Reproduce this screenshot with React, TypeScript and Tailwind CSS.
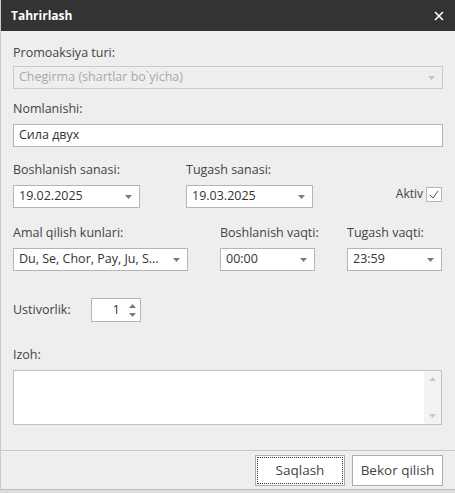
import React from "react";

const font = { fontFamily: '"Open Sans", "Noto Sans", sans-serif' };

const Arrow = ({ color = "#7a7a7a" }: { color?: string }) => (
  <svg width="7" height="4" viewBox="0 0 7 4" className="shrink-0">
    <path d="M0 0h7L3.5 4z" fill={color} />
  </svg>
);

const Label = ({ children }: { children: React.ReactNode }) => (
  <div className="text-[12.5px] leading-[16px] text-[#444] whitespace-nowrap">{children}</div>
);

const DropBox = ({ value, className = "" }: { value: string; className?: string }) => (
  <div className={`h-[23px] bg-white border border-[#b5b5b5] flex items-center justify-between pl-[5px] pr-[7px] ${className}`}>
    <span className="text-[12.5px] text-[#333] whitespace-nowrap">{value}</span>
    <Arrow />
  </div>
);

export default function App() {
  return (
    <div className="w-[455px] h-[493px] bg-[#dcdcdc] overflow-hidden" style={font}>
      <div className="h-[490px] bg-[#eeeeee] border-l border-[#c9c9c9] border-b border-b-[#bdbdbd] flex flex-col">
        <div className="h-[31px] bg-[#333333] flex items-center justify-between pl-[10px] pr-[11px] shrink-0">
          <span className="text-[12px] font-bold text-white">Tahrirlash</span>
          <svg width="10" height="10" viewBox="0 0 10 10">
            <path d="M1 1l8 8M9 1l-8 8" stroke="#fff" strokeWidth="1.6" />
          </svg>
        </div>

        <div className="px-[12px] flex-1 flex flex-col">
          <div className="mt-[14px]">
            <Label>Promoaksiya turi:</Label>
            <div className="mt-[5px] h-[23px] border border-[#c8c8c8] flex items-center justify-between pl-[5px] pr-[7px]">
              <span className="text-[12.5px] text-[#a9a9a9]">Chegirma (shartlar bo`yicha)</span>
              <Arrow color="#c4c4c4" />
            </div>
          </div>

          <div className="mt-[12px]">
            <Label>Nomlanishi:</Label>
            <div className="mt-[7px] h-[23px] bg-white border border-[#b5b5b5] flex items-center pl-[5px]">
              <span className="text-[12.5px] text-[#333]">Сила двух</span>
            </div>
          </div>

          <div className="mt-[15px] flex items-end">
            <div className="w-[127px]">
              <Label>Boshlanish sanasi:</Label>
              <DropBox value="19.02.2025" className="mt-[7px]" />
            </div>
            <div className="w-[127px] ml-[46px]">
              <Label>Tugash sanasi:</Label>
              <DropBox value="19.03.2025" className="mt-[7px]" />
            </div>
            <div className="ml-auto mr-[1px] mb-[5px] flex items-center gap-[3px]">
              <span className="text-[12px] text-[#444]">Aktiv</span>
              <div className="w-[16px] h-[15px] bg-white border border-[#b5b5b5] flex items-center justify-center">
                <svg width="10" height="9" viewBox="0 0 10 9">
                  <path d="M1 5l3 3 5-7" stroke="#555" strokeWidth="1" fill="none" />
                </svg>
              </div>
            </div>
          </div>

          <div className="mt-[17px] flex">
            <div className="w-[175px]">
              <Label>Amal qilish kunlari:</Label>
              <DropBox value="Du, Se, Chor, Pay, Ju, S..." className="mt-[7px]" />
            </div>
            <div className="w-[95px] ml-[32px]">
              <Label>Boshlanish vaqti:</Label>
              <DropBox value="00:00" className="mt-[7px]" />
            </div>
            <div className="w-[95px] ml-[32px]">
              <Label>Tugash vaqti:</Label>
              <DropBox value="23:59" className="mt-[7px]" />
            </div>
          </div>

          <div className="mt-[27px] flex items-center">
            <div className="w-[78px]">
              <Label>Ustivorlik:</Label>
            </div>
            <div className="w-[50px] h-[24px] bg-white border border-[#b5b5b5] flex items-center justify-end pr-[4px]">
              <span className="text-[13px] text-[#333] mr-[9px]">1</span>
              <div className="flex flex-col gap-[5px]">
                <svg width="7" height="4" viewBox="0 0 7 4">
                  <path d="M0 4h7L3.5 0z" fill="#7a7a7a" />
                </svg>
                <Arrow />
              </div>
            </div>
          </div>

          <div className="mt-[25px]">
            <Label>Izoh:</Label>
            <div className="mt-[7px] mr-[1px] h-[55px] bg-white border border-[#c0c0c0] flex justify-end">
              <div className="w-[17px] bg-[#f3f3f3] flex flex-col items-center justify-between py-[6px]">
                <svg width="7" height="4" viewBox="0 0 7 4">
                  <path d="M0 4h7L3.5 0z" fill="#c8c8c8" />
                </svg>
                <Arrow color="#c8c8c8" />
              </div>
            </div>
          </div>
        </div>

        <div className="h-[39px] border-t border-[#c8c8c8] flex items-start justify-end gap-[7px] pt-[4px] pr-[12px] shrink-0">
          <button className="w-[90px] h-[31px] bg-white border border-[#acacac] p-[1px]">
            <div className="w-full h-full border border-dotted border-[#333] flex items-center justify-center text-[13.5px] text-[#444]">
              Saqlash
            </div>
          </button>
          <button className="w-[91px] h-[31px] bg-white border border-[#acacac] flex items-center justify-center text-[13.5px] text-[#444]">
            Bekor qilish
          </button>
        </div>
      </div>
    </div>
  );
}
